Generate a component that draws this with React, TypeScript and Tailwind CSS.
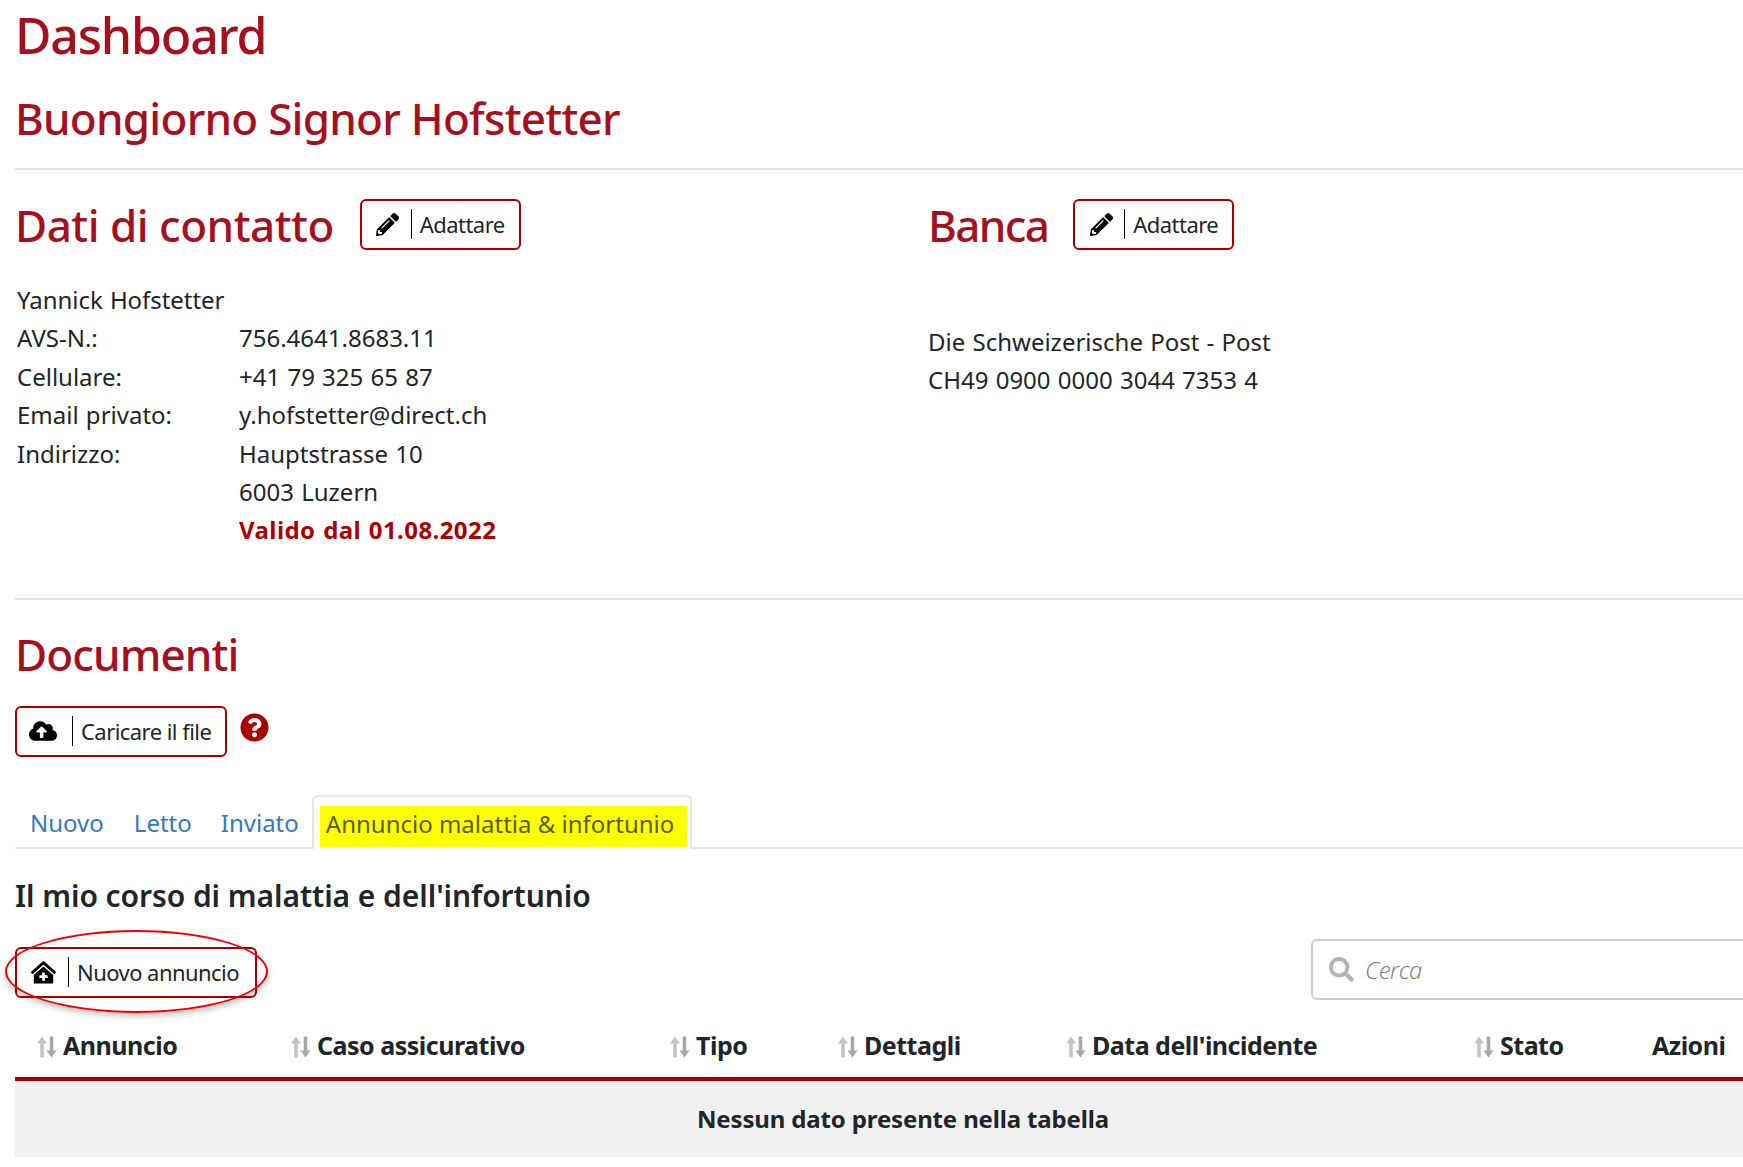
import type { ReactNode } from 'react'
import { FaClinicMedical, FaCloudUploadAlt, FaPencilAlt, FaQuestionCircle, FaSearch } from 'react-icons/fa'

function IconButton({ icon, label, gap, className = '' }: { icon: ReactNode; label: string; gap: string; className?: string }) {
  return (
    <button className={`flex h-[51px] items-center rounded-[6px] border-2 border-[#aa0000] bg-white pl-[10px] pr-[14px] ${className}`}>
      <span className="flex w-[32px] justify-center text-[23px] text-black">{icon}</span>
      <span className={`${gap} h-[30px] w-px bg-black`} />
      <span className="ml-[8px] text-[22px] tracking-[-0.55px] text-[#212529]">{label}</span>
    </button>
  )
}

function SortIcon() {
  return (
    <svg width="20" height="22" viewBox="0 0 20 22" className="mr-[6px] inline-block shrink-0 align-[-3px]">
      <path d="M5 0.5 L10 7.5 H6.8 V21.5 H3.2 V7.5 H0 Z" fill="#c4c4c4" />
      <path d="M14.5 21.5 L19.5 14.5 H16.3 V0.5 H12.7 V14.5 H9.5 Z" fill="#a8a8a8" />
    </svg>
  )
}

const contatto = [
  ['AVS-N.:', '756.4641.8683.11'],
  ['Cellulare:', '+41 79 325 65 87'],
  ['Email privato:', 'y.hofstetter@direct.ch'],
  ['Indirizzo:', 'Hauptstrasse 10'],
  ['', '6003 Luzern'],
]

const colonne = [
  { nome: 'Annuncio', cls: 'w-[276px] pl-[22px]' },
  { nome: 'Caso assicurativo', cls: 'w-[379px]' },
  { nome: 'Tipo', cls: 'w-[168px]' },
  { nome: 'Dettagli', cls: 'w-[228px]' },
  { nome: "Data dell'incidente", cls: 'w-[408px]' },
  { nome: 'Stato', cls: 'w-[178px]' },
]

export default function App() {
  return (
    <div className="h-[1167px] w-full overflow-hidden bg-white font-['Noto_Sans',sans-serif] text-[24px] text-[#212529]">
      <div className="relative ml-[15px] w-[1776px]">
        <h1 className="text-[50px] font-medium leading-[70px] tracking-[-1.2px] text-[#a6101e]">Dashboard</h1>
        <h2 className="mt-[18px] text-[44px] font-medium leading-[60px] tracking-[-0.75px] text-[#a6101e]">Buongiorno Signor Hofstetter</h2>
        <hr className="mt-[20px] border-t-2 border-[#e6e6e6]" />

        <div className="flex pt-[28px]">
          <div className="w-[913px]">
            <div className="flex items-center">
              <h2 className="text-[44px] font-medium leading-[54px] tracking-[-0.5px] text-[#a6101e]">Dati di contatto</h2>
              <IconButton icon={<FaPencilAlt />} label="Adattare" gap="ml-[7px]" className="ml-[26px] mt-[-2px]" />
            </div>
            <div className="mt-[29px] pl-[2px] text-[24px] leading-[38.4px] [word-spacing:1px]">
              <div className="tracking-[-0.05px]">Yannick Hofstetter</div>
              {contatto.map(([k, v]) => (
                <div key={v} className="flex">
                  <span className="w-[222px]">{k}</span>
                  <span>{v}</span>
                </div>
              ))}
              <div className="pl-[222px] font-bold tracking-[0.42px] text-[#aa0000]">Valido dal 01.08.2022</div>
            </div>
          </div>
          <div>
            <div className="flex items-center">
              <h2 className="text-[44px] font-medium leading-[54px] tracking-[-1.6px] text-[#a6101e]">Banca</h2>
              <IconButton icon={<FaPencilAlt />} label="Adattare" gap="ml-[7px]" className="ml-[25px] mt-[-2px]" />
            </div>
            <div className="mt-[71px] text-[24px] leading-[38.4px] [word-spacing:1px]">
              <div>Die Schweizerische Post - Post</div>
              <div>CH49 0900 0000 3044 7353 4</div>
            </div>
          </div>
        </div>

        <hr className="mt-[48px] border-t-2 border-[#e6e6e6]" />
        <h2 className="mt-[27px] text-[44px] font-medium leading-[54px] tracking-[-0.9px] text-[#a6101e]">Documenti</h2>

        <div className="mt-[25px] flex items-start">
          <IconButton icon={<FaCloudUploadAlt className="text-[28px]" />} label="Caricare il file" gap="ml-[13px]" />
          <FaQuestionCircle className="ml-[13px] mt-[7px] text-[29px] text-[#aa0000]" />
        </div>

        <div className="mt-[38px] flex h-[54px] items-end border-b-2 border-[#e6e6e6]">
          <a className="mb-[1px] pl-[15px] pr-[16px] py-[6px] leading-[34px] text-[#337ab7]">Nuovo</a>
          <a className="mb-[1px] pl-[14px] pr-[15px] py-[6px] leading-[34px] text-[#337ab7]">Letto</a>
          <a className="mb-[1px] px-[14px] py-[6px] leading-[34px] text-[#337ab7]">Inviato</a>
          <div className="mb-[-2px] ml-[-1px] h-[54px] rounded-t-[6px] border-x-2 border-t-2 border-[#e6e6e6] bg-white pl-[6px] pr-[3px] pt-[9px]">
            <span className="block h-[41px] w-[367px] bg-[#ffff00] pl-[6px] leading-[35px] text-[#5c5c00]">
              Annuncio malattia &amp; infortunio
            </span>
          </div>
        </div>

        <h3 className="mt-[27px] text-[30px] font-semibold leading-[40px] tracking-[-0.06px]">Il mio corso di malattia e dell'infortunio</h3>

        <div className="relative mt-[23px] h-[61px]">
          <IconButton icon={<FaClinicMedical className="text-[25px]" />} label="Nuovo annuncio" gap="ml-[9px]" className="absolute left-0 top-[8px] w-[242px] rounded-[4px]" />
          <div className="pointer-events-none absolute left-[-10px] top-[-9px] h-[83px] w-[263px] rounded-[50%] border-2 border-[#ee0000] shadow-[0_3px_6px_rgba(0,0,0,0.25)]" />
          <div className="absolute left-[1296px] top-0 flex h-[61px] w-[470px] items-center rounded-[6px] border-2 border-[#cccccc] pl-[16px]">
            <FaSearch className="text-[25px] text-[#b4b4b4]" />
            <span className="ml-[11px] pt-[2px] font-['Open_Sans',sans-serif] text-[24px] font-light italic tracking-[-0.5px] text-[#777777]">Cerca</span>
          </div>
        </div>

        <table className="mt-[14px] w-full table-fixed border-collapse">
          <thead>
            <tr className="h-[65px] border-b-[4px] border-[#aa0000]">
              {colonne.map((c) => (
                <th key={c.nome} className={`${c.cls} text-left text-[25px] font-bold tracking-[-0.5px]`}>
                  <SortIcon />
                  {c.nome}
                </th>
              ))}
              <th className="text-left text-[25px] font-bold tracking-[-0.5px]">Azioni</th>
            </tr>
          </thead>
          <tbody>
            <tr className="h-[78px] bg-[#f1f1f1]">
              <td colSpan={7} className="text-center font-bold tracking-[-0.15px]">
                Nessun dato presente nella tabella
              </td>
            </tr>
          </tbody>
        </table>
      </div>
    </div>
  )
}
